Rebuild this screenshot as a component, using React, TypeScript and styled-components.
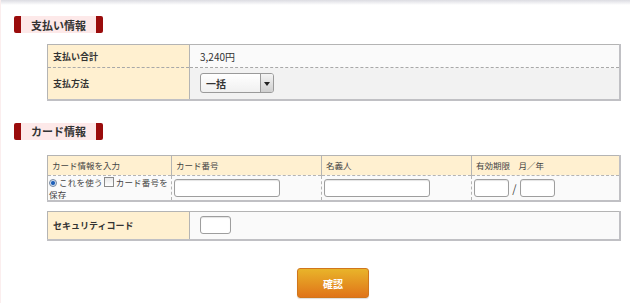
import styled, { createGlobalStyle } from 'styled-components';

const GlobalStyle = createGlobalStyle`
	* { box-sizing: border-box; }
	body {
		margin: 0;
		background: #fff;
		font-family: "Noto Sans CJK JP", "Noto Sans", sans-serif;
		color: #333;
	}
`;

export default function App() {
	return (
		<>
			<GlobalStyle />
			<StyledPage>
				<StyledShade />
				<StyledSection $top={11}>
					<StyledHeading>支払い情報</StyledHeading>
					<StyledTable $gap={11}>
						<tbody>
							<tr>
								<StyledLabel $h={23} $dashed>支払い合計</StyledLabel>
								<StyledValue $h={23} $bg="#fafafa" $dashed>3,240円</StyledValue>
							</tr>
							<tr>
								<StyledLabel $h={32}>支払方法</StyledLabel>
								<StyledValue $h={32} $bg="#f2f2f2">
									<StyledSelect>
										<span>一括</span>
										<StyledArrow />
									</StyledSelect>
								</StyledValue>
							</tr>
						</tbody>
					</StyledTable>
				</StyledSection>

				<StyledSection $top={22}>
					<StyledHeading>カード情報</StyledHeading>
					<StyledTable $gap={15}>
						<colgroup>
							<col style={{ width: 124 }} />
							<col style={{ width: 150 }} />
							<col style={{ width: 150 }} />
							<col />
						</colgroup>
						<tbody>
							<tr>
								<StyledHead>カード情報を入力</StyledHead>
								<StyledHead>カード番号</StyledHead>
								<StyledHead>名義人</StyledHead>
								<StyledHead>有効期限　月／年</StyledHead>
							</tr>
							<tr>
								<StyledCell $first>
									<StyledRadio /> これを使う<StyledCheck /> カード番号を保存
								</StyledCell>
								<StyledCell>
									<StyledInput $w={106} />
								</StyledCell>
								<StyledCell>
									<StyledInput $w={106} />
								</StyledCell>
								<StyledCell>
									<StyledInput $w={35} />
									<StyledSlash>/</StyledSlash>
									<StyledInput $w={35} />
								</StyledCell>
							</tr>
						</tbody>
					</StyledTable>
					<StyledTable $gap={9}>
						<tbody>
							<tr>
								<StyledLabel $h={29}>セキュリティコード</StyledLabel>
								<StyledValue $h={29} $bg="#fafafa">
									<StyledInput $w={31} />
								</StyledValue>
							</tr>
						</tbody>
					</StyledTable>
				</StyledSection>

				<StyledFooter>
					<StyledButton type="button">確認</StyledButton>
				</StyledFooter>
			</StyledPage>
		</>
	);
}

const StyledPage = styled.div`
	width: 630px;
	height: 303px;
	border-left: 1px solid #fbeeee;
	overflow: hidden;
`;

const StyledShade = styled.div`
	height: 5px;
	background: linear-gradient(#dcdce2, #f4f4f6 70%, #fff);
`;

const StyledSection = styled.section<{ $top: number }>`
	margin-top: ${p => p.$top}px;
	padding-left: 13px;
	padding-right: 10px;
`;

const StyledHeading = styled.h2`
	display: flex;
	align-items: center;
	width: fit-content;
	margin: 0;
	height: 17px;
	padding: 0 10px 0 10px;
	font-size: 11px;
	font-weight: bold;
	color: #333;
	background: #fde9e9;
	border-left: 7px solid #9a0c0c;
	border-right: 7px solid #9a0c0c;
	border-radius: 2px;
`;

const StyledTable = styled.table<{ $gap: number }>`
	margin: ${p => p.$gap}px 0 0 33px;
	width: 574px;
	border-collapse: collapse;
	table-layout: fixed;
	border: 1px solid #b4b4b4;
	border-right-width: 2px;
	border-bottom-width: 2px;
	border-right-color: #c0c0c4;
	border-bottom-color: #c0c0c4;
	font-size: 9px;
`;

const StyledLabel = styled.th<{ $h: number; $dashed?: boolean }>`
	width: 142px;
	height: ${p => p.$h}px;
	padding: 0 0 0 5px;
	text-align: left;
	font-weight: bold;
	color: #333;
	background: #fff0d0;
	border-right: 1px solid #b4b4b4;
	border-bottom: ${p => (p.$dashed ? '1px dashed #a8a8a8' : 'none')};
`;

const StyledValue = styled.td<{ $h: number; $bg: string; $dashed?: boolean }>`
	height: ${p => p.$h}px;
	padding: 0 0 0 10px;
	font-size: 10px;
	color: #333;
	background: ${p => p.$bg};
	border-bottom: ${p => (p.$dashed ? '1px dashed #a8a8a8' : 'none')};
`;

const StyledSelect = styled.div`
	display: flex;
	align-items: center;
	justify-content: space-between;
	width: 74px;
	height: 20px;
	padding-left: 5px;
	border: 1px solid #9a9a9a;
	border-radius: 3px;
	background: linear-gradient(#fff, #f0f0f0);
	font-size: 10px;
	font-weight: bold;
	overflow: hidden;
`;

const StyledArrow = styled.span`
	position: relative;
	width: 13px;
	height: 100%;
	border-left: 1px solid #9a9a9a;
	background: linear-gradient(#f4f4f4, #cfcfcf);

	&::after {
		content: '';
		position: absolute;
		left: 3px;
		top: 8px;
		border-left: 3px solid transparent;
		border-right: 3px solid transparent;
		border-top: 4px solid #222;
	}
`;

const StyledHead = styled.th`
	height: 20px;
	padding: 0 0 0 4px;
	text-align: left;
	font-size: 8.5px;
	font-weight: normal;
	color: #444;
	background: #fff0d0;
	border-right: 1px solid #b4b4b4;
	border-bottom: 1px dashed #b4b4b4;
`;

const StyledCell = styled.td<{ $first?: boolean }>`
	height: 24px;
	padding: ${p => (p.$first ? '0 0 0 1px' : '0 0 0 2px')};
	font-size: ${p => (p.$first ? '8.5px' : '9px')};
	line-height: 12px;
	letter-spacing: ${p => (p.$first ? '0.2px' : '0')};
	color: #444;
	background: #fafafa;
	border-right: 1px dashed #b4b4b4;
	vertical-align: middle;
`;

const StyledRadio = styled.span`
	display: inline-block;
	width: 8px;
	height: 8px;
	vertical-align: -1px;
	border-radius: 50%;
	border: 1px solid #7a8aa0;
	background: radial-gradient(circle, #1d5fb8 0 1.5px, #cfe0f4 2.5px);
`;

const StyledCheck = styled.span`
	display: inline-block;
	width: 10px;
	height: 10px;
	margin-left: 1px;
	vertical-align: -1px;
	border: 1px solid #8a8a8a;
	background: linear-gradient(#e8e8e8, #fff);
`;

const StyledInput = styled.input<{ $w: number }>`
	width: ${p => p.$w}px;
	height: 18px;
	padding: 0 3px;
	margin: 0;
	vertical-align: middle;
	border: 1px solid #9e9e9e;
	border-radius: 3px;
	background: #fff;
	box-shadow: inset 0 1px 1px #e4e4e4;
	outline: none;
`;

const StyledSlash = styled.span`
	display: inline-block;
	width: 11px;
	text-align: center;
	font-size: 11px;
	vertical-align: middle;
`;

const StyledFooter = styled.div`
	display: flex;
	justify-content: center;
	padding-top: 27px;
	padding-left: 35px;
`;

const StyledButton = styled.button`
	width: 72px;
	height: 30px;
	padding: 0;
	border: 1px solid #d0761c;
	border-radius: 3px;
	background: linear-gradient(#e9b42a, #e07419);
	color: #fff;
	font-family: inherit;
	font-size: 10px;
	font-weight: bold;
	cursor: pointer;
	box-shadow: 0 1px 1px #ddd;
`;
